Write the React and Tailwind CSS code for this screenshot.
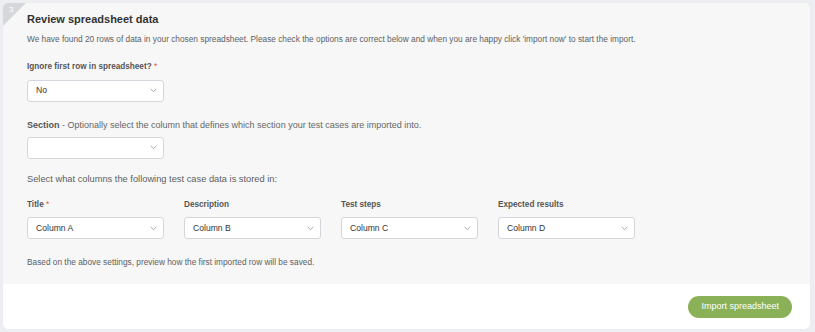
import React from "react";

function Chevron() {
  return (
    <svg width="7" height="5" viewBox="0 0 7 5" fill="none" className="shrink-0">
      <path d="M1 1.2 L3.5 3.6 L6 1.2" stroke="#9aa0a6" strokeWidth="0.9" strokeLinecap="round" strokeLinejoin="round" />
    </svg>
  );
}

function Select({ value }) {
  return (
    <div className="w-[137px] h-[22px] bg-white border border-[#d3d6da] rounded-[3px] flex items-center justify-between pl-[8px] pr-[6px]">
      <span className="text-[8.6px] text-[#333]">{value}</span>
      <Chevron />
    </div>
  );
}

function Label({ children, required }) {
  return (
    <div className="text-[8.2px] font-bold text-[#555] leading-none">
      {children}
      {required && <span className="text-[#e04b4b] font-normal"> *</span>}
    </div>
  );
}

export default function App() {
  const cols = [
    { label: "Title", value: "Column A", required: true },
    { label: "Description", value: "Column B" },
    { label: "Test steps", value: "Column C" },
    { label: "Expected results", value: "Column D" },
  ];
  return (
    <div className="w-[815px] h-[332px] bg-[#eceef1] p-[3px] font-['Liberation_Sans',Arial,sans-serif]">
      <div className="relative w-[807px] h-[326px] rounded-[5px] overflow-hidden flex flex-col shadow-[0_0_1px_rgba(0,0,0,0.08)]">
        <div className="absolute left-0 top-0 w-0 h-0 border-t-[23px] border-r-[23px] border-t-[#d5d7db] border-r-transparent" />
        <span className="absolute left-[6px] top-[3px] text-[8px] text-white leading-none">3</span>
        <div className="h-[281px] bg-[#f7f7f7] pl-[24px] pt-[11px]">
          <h1 className="text-[11px] font-bold text-[#333] leading-none">Review spreadsheet data</h1>
          <p className="mt-[10px] text-[8.3px] text-[#5c5f63] leading-none">
            We have found 20 rows of data in your chosen spreadsheet. Please check the options are correct below and when you are happy click 'import now' to start the import.
          </p>
          <div className="mt-[20px]">
            <Label required>Ignore first row in spreadsheet?</Label>
            <div className="mt-[8px]"><Select value="No" /></div>
          </div>
          <div className="mt-[19px]">
            <div className="text-[9px] text-[#666] leading-none">
              <span className="font-bold text-[#555]">Section</span> - Optionally select the column that defines which section your test cases are imported into.
            </div>
            <div className="mt-[7px]"><Select value="" /></div>
          </div>
          <p className="mt-[16px] text-[9.3px] text-[#5c5f63] leading-none">Select what columns the following test case data is stored in:</p>
          <div className="mt-[17px] flex gap-[20px]">
            {cols.map((c) => (
              <div key={c.label}>
                <Label required={c.required}>{c.label}</Label>
                <div className="mt-[8px]"><Select value={c.value} /></div>
              </div>
            ))}
          </div>
          <p className="mt-[19px] text-[8.3px] text-[#5c5f63] leading-none">Based on the above settings, preview how the first imported row will be saved.</p>
        </div>
        <div className="flex-1 bg-white flex items-center justify-end pr-[18px]">
          <button className="h-[22px] px-[13px] rounded-full bg-[#8bb158] text-white text-[9px]">Import spreadsheet</button>
        </div>
      </div>
    </div>
  );
}
